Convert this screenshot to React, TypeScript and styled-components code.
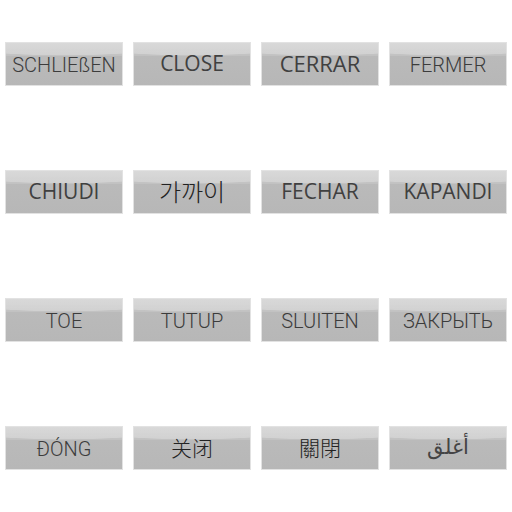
import React from "react";
import styled, { createGlobalStyle } from "styled-components";

type Face = "thin" | "soft" | "cjk" | "arabic";

interface Item {
  label: string;
  face: Face;
  size: number;
  lang?: string;
}

const items: Item[] = [
  { label: "SCHLIEßEN", face: "thin", size: 20 },
  { label: "CLOSE", face: "soft", size: 21 },
  { label: "CERRAR", face: "soft", size: 22 },
  { label: "FERMER", face: "thin", size: 20 },
  { label: "CHIUDI", face: "soft", size: 21 },
  { label: "가까이", face: "cjk", size: 24, lang: "ko" },
  { label: "FECHAR", face: "soft", size: 21 },
  { label: "KAPANDI", face: "soft", size: 21 },
  { label: "TOE", face: "thin", size: 20 },
  { label: "TUTUP", face: "thin", size: 20 },
  { label: "SLUITEN", face: "thin", size: 20 },
  { label: "ЗАКРЫТЬ", face: "thin", size: 20 },
  { label: "ĐÓNG", face: "thin", size: 20 },
  { label: "关闭", face: "cjk", size: 21, lang: "zh-CN" },
  { label: "關閉", face: "cjk", size: 21, lang: "zh-TW" },
  { label: "أغلق", face: "arabic", size: 21, lang: "ar" },
];

const fonts: Record<Face, string> = {
  thin: `Roboto, "Liberation Sans", Arial, sans-serif`,
  soft: `"Open Sans", "Liberation Sans", sans-serif`,
  cjk: `"Noto Sans CJK SC", "Noto Sans CJK KR", "Noto Sans", sans-serif`,
  arabic: `"DejaVu Sans", "Noto Sans", sans-serif`,
};

const weights: Record<Face, number> = {
  thin: 300,
  soft: 400,
  cjk: 300,
  arabic: 300,
};

// vertical nudge of the label inside the button
const lift: Record<Face, number> = {
  thin: 2,
  soft: -2,
  cjk: -2,
  arabic: -2,
};

const colors: Record<Face, string> = {
  thin: "#3c3c3c",
  soft: "#404040",
  cjk: "#222",
  arabic: "#444",
};

const App = () => {
  return (
    <>
      <GlobalStyle />
      <Grid>
        {items.map((item, i) => (
          <Cell key={i}>
            <Button face={item.face} size={item.size} lang={item.lang}>
              {item.label}
            </Button>
          </Cell>
        ))}
      </Grid>
    </>
  );
};

const GlobalStyle = createGlobalStyle`
  html, body {
    margin: 0;
    padding: 0;
    background: #fff;
  }
`;

const Grid = styled.div`
  width: 512px;
  height: 512px;
  display: grid;
  grid-template-columns: repeat(4, 128px);
  grid-template-rows: repeat(4, 128px);
`;

const Cell = styled.div`
  display: flex;
  align-items: center;
  justify-content: center;
`;

const Button = styled.div<{ face: Face; size: number }>`
  box-sizing: border-box;
  width: 118px;
  height: 44px;

  display: flex;
  align-items: center;
  justify-content: center;
  padding-top: ${(p) => Math.max(0, lift[p.face])}px;
  padding-bottom: ${(p) => Math.max(0, -lift[p.face])}px;

  border: 1px solid #e2e2e2;
  background:
    radial-gradient(
      ellipse 160% 80% at 50% -50%,
      rgba(255, 255, 255, 0.24) 98%,
      rgba(255, 255, 255, 0) 100%
    ),
    linear-gradient(to bottom, #cdcdcd 0%, #c2c2c2 30%, #bababa 31%, #b7b7b7 100%);

  font-family: ${(p) => fonts[p.face]};
  font-size: ${(p) => p.size}px;
  font-weight: ${(p) => weights[p.face]};
  color: ${(p) => colors[p.face]};
  line-height: 1;
  white-space: nowrap;
`;

export default App;
